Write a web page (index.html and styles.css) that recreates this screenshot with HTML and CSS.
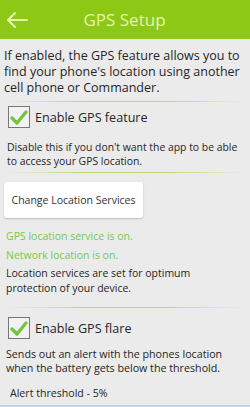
FILE: index.html
```html
<!DOCTYPE html>
<html lang="en">
<head>
    <meta charset="UTF-8">
    <title>GPS Setup</title>
    <link rel="stylesheet" href="styles.css">
</head>
<body>
    <div class="header">
        <svg class="back" width="24" height="18" viewBox="0 0 24 18">
            <path d="M22 9H3M10 2L3 9L10 16" fill="none" stroke="#e6f5a8" stroke-width="2" stroke-linecap="round" stroke-linejoin="round"/>
        </svg>
        <h1>GPS Setup</h1>
    </div>

    <p class="intro">If enabled, the GPS feature allows you to find your phone's location using another cell phone or Commander.</p>
    <div class="divider"></div>

    <div class="check-row">
        <span class="checkbox">
            <svg width="18" height="16" viewBox="0 0 18 16">
                <path d="M2 9L7 14L16 3" fill="none" stroke="#72c43a" stroke-width="3.2" stroke-linecap="round" stroke-linejoin="round"/>
            </svg>
        </span>
        <span class="check-label">Enable GPS feature</span>
    </div>
    <p class="desc">Disable this if you don't want the app to be able to access your GPS location.</p>
    <div class="divider"></div>

    <button class="loc-btn">Change Location Services</button>
    <p class="status first">GPS location service is on.</p>
    <p class="status">Network location is on.</p>
    <p class="note">Location services are set for optimum protection of your device.</p>
    <div class="divider"></div>

    <div class="check-row flare">
        <span class="checkbox">
            <svg width="18" height="16" viewBox="0 0 18 16">
                <path d="M2 9L7 14L16 3" fill="none" stroke="#72c43a" stroke-width="3.2" stroke-linecap="round" stroke-linejoin="round"/>
            </svg>
        </span>
        <span class="check-label">Enable GPS flare</span>
    </div>
    <p class="desc flare-desc">Sends out an alert with the phones location when the battery gets below the threshold.</p>
    <div class="threshold">Alert threshold - 5%</div>
</body>
</html>
```

FILE: styles.css
```css
body {
    margin: 0;
    padding: 0;
    width: 250px;
    height: 407px;
    overflow: hidden;
    background-color: #ebebeb;
    font-family: "Open Sans", "Noto Sans", sans-serif;
    color: #262626;
}

.header {
    background-color: #8dc817;
    height: 39px;
    display: flex;
    align-items: center;
}

.back {
    margin-left: 5px;
}

.header h1 {
    margin: 0;
    flex: 1;
    text-align: center;
    font-size: 17px;
    font-weight: normal;
    color: #e6f5a8;
    padding-right: 30px;
}

p {
    margin: 0;
}

.intro {
    font-size: 12.5px;
    line-height: 16px;
    padding: 9px 4px 5px 4px;
}

.divider {
    height: 1px;
    margin: 0 6px;
    background: linear-gradient(to right, rgba(160, 205, 60, 0), #b7d86a 35%, #b7d86a 65%, rgba(160, 205, 60, 0));
}

.check-row {
    display: flex;
    align-items: center;
    padding: 4px 8px 0 8px;
}

.check-row.flare {
    padding-top: 9px;
}

.checkbox {
    width: 20px;
    height: 20px;
    border: 1px solid #777;
    background: #f2f2f2;
    display: flex;
    align-items: center;
    justify-content: center;
}

.check-label {
    font-size: 12.6px;
    margin-left: 5px;
}

.desc {
    font-size: 10.4px;
    line-height: 14px;
    padding: 12px 4px 4px 7px;
}

.desc.flare-desc {
    font-size: 10.7px;
    padding: 8px 6px 0 6px;
}

.loc-btn {
    display: block;
    margin: 9px 0 0 4px;
    width: 139px;
    height: 36px;
    background: #fff;
    border: none;
    border-radius: 3px;
    box-shadow: 0 1px 2px rgba(0, 0, 0, 0.2);
    font-family: "Open Sans", "Noto Sans", sans-serif;
    font-size: 10.5px;
    color: #333;
    padding: 0;
}

.status {
    font-size: 10.5px;
    color: #73cc45;
    padding: 5px 6px 0 6px;
    line-height: 14px;
}

.status.first {
    padding-top: 11px;
}

.note {
    font-size: 10.5px;
    line-height: 15px;
    padding: 4px 26px 11px 6px;
}

.threshold {
    font-size: 10.6px;
    line-height: 16px;
    padding: 10px 10px 4px 10px;
    border-bottom: 2px solid #c4d4ea;
}
```
